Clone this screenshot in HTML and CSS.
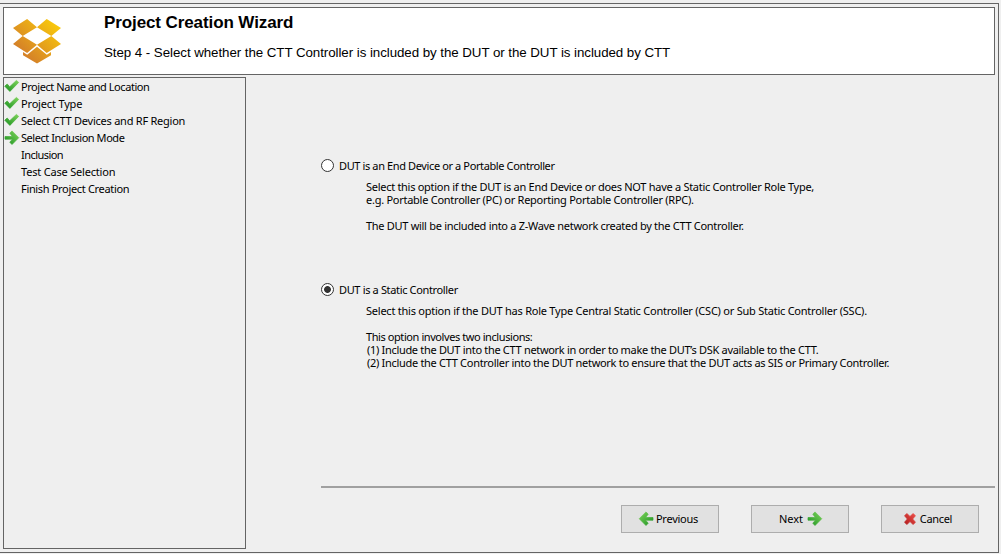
FILE: index.html
```html
<!DOCTYPE html>
<html lang="en">
<head>
<meta charset="utf-8">
<title>Project Creation Wizard</title>
<link rel="stylesheet" href="styles.css">
</head>
<body>
<svg width="0" height="0" class="defs" aria-hidden="true">
  <defs>
    <linearGradient id="green" x1="0" y1="1" x2="1" y2="0"><stop offset="0.2" stop-color="#2f9f2c"/><stop offset="1" stop-color="#7fd45c"/></linearGradient>
    <linearGradient id="red" x1="0" y1="1" x2="1" y2="0"><stop offset="0" stop-color="#b01c1c"/><stop offset="1" stop-color="#ee4f4a"/></linearGradient>
    <linearGradient id="gold" gradientUnits="userSpaceOnUse" x1="8" y1="38" x2="42" y2="4"><stop offset="0.1" stop-color="#d58228"/><stop offset="1" stop-color="#f9c80c"/></linearGradient>
    <symbol id="check" viewBox="0 0 16 16"><path d="M0.8 7.2 3.2 5 5.7 7.8 12.4 1.4 14.7 3.4 5.9 12.4Z" fill="url(#green)" stroke="url(#green)" stroke-width="0.8" stroke-linejoin="round"/></symbol>
    <symbol id="arrow" viewBox="0 0 16 16"><path d="M1 6.5H8.4L5.8 3.2 8 0.9 14.8 7.7 8 14.5 5.8 12.2 8.4 9.2H1Z" fill="url(#green)" stroke="url(#green)" stroke-width="0.7" stroke-linejoin="round"/></symbol>
    <symbol id="cross" viewBox="0 0 12 12"><path d="M0.5 2.7 2.9 0.5 6 3.4 9.1 0.5 11.5 2.7 8.7 6 11.5 9.3 9.1 11.5 6 8.6 2.9 11.5 0.5 9.3 3.3 6Z" fill="url(#red)" stroke="url(#red)" stroke-width="0.7" stroke-linejoin="round"/></symbol>
  </defs>
</svg>
<main class="window">
  <header class="banner">
    <svg class="logo" width="48" height="45" viewBox="0 0 48 45">
      <path fill="url(#gold)" d="M14.1 0 24 8.2 9.7 17 0 9ZM33.7 0 48 9 38.3 17 24 8.2ZM0 25 9.7 17 24 25.8 14.1 34ZM38.3 17 48 25 33.7 34 24 25.8ZM24 27.7 33.8 35.8 38 33V36.2L24 44.6 10 36.2V33L14.2 35.8Z"/>
    </svg>
    <div class="headings">
      <h1 class="title">Project Creation Wizard</h1>
      <p class="subtitle">Step 4 - Select whether the CTT Controller is included by the DUT or the DUT is included by CTT</p>
    </div>
  </header>
  <div class="body">
    <ol class="steps">
      <li class="step"><svg class="icon"><use href="#check"/></svg><span class="s1">Project Name and Location</span></li>
      <li class="step"><svg class="icon"><use href="#check"/></svg><span class="s2">Project Type</span></li>
      <li class="step"><svg class="icon"><use href="#check"/></svg><span class="s3">Select CTT Devices and RF Region</span></li>
      <li class="step"><svg class="icon"><use href="#arrow"/></svg><span class="s4">Select Inclusion Mode</span></li>
      <li class="step"><i class="icon"></i><span class="s5">Inclusion</span></li>
      <li class="step"><i class="icon"></i><span class="s6">Test Case Selection</span></li>
      <li class="step"><i class="icon"></i><span class="s7">Finish Project Creation</span></li>
    </ol>
    <section class="content">
      <div class="options">
        <div class="option first">
          <div class="choice"><span class="radio"></span><span class="c1">DUT is an End Device or a Portable Controller</span></div>
          <div class="details">
            <p class="d1">Select this option if the DUT is an End Device or does NOT have a Static Controller Role Type,</p>
            <p class="d2">e.g. Portable Controller (PC) or Reporting Portable Controller (RPC).</p>
            <p class="d3 spaced">The DUT will be included into a Z-Wave network created by the CTT Controller.</p>
          </div>
        </div>
        <div class="option">
          <div class="choice"><span class="radio checked"></span><span class="c2">DUT is a Static Controller</span></div>
          <div class="details">
            <p class="d4">Select this option if the DUT has Role Type Central Static Controller (CSC) or Sub Static Controller (SSC).</p>
            <p class="d5 spaced">This option involves two inclusions:</p>
            <p class="d6">(1) Include the DUT into the CTT network in order to make the DUT’s DSK available to the CTT.</p>
            <p class="d7">(2) Include the CTT Controller into the DUT network to ensure that the DUT acts as SIS or Primary Controller.</p>
          </div>
        </div>
      </div>
      <footer class="actions">
        <button class="button"><svg class="btn-icon flip"><use href="#arrow"/></svg><span class="b1">Previous</span></button>
        <button class="button next"><span class="b2">Next</span><svg class="btn-icon"><use href="#arrow"/></svg></button>
        <button class="button cancel"><svg class="cross"><use href="#cross"/></svg><span class="b3">Cancel</span></button>
      </footer>
    </section>
  </div>
</main>
</body>
</html>
```
FILE: styles.css
```css
* { box-sizing: border-box; }
body {
  margin: 0;
  padding-top: 3px;
  width: 1001px;
  height: 554px;
  overflow: hidden;
  background: #efefef;
  color: #000;
  font: 11px/13px "Noto Sans", sans-serif;
}
h1, p, ol { margin: 0; padding: 0; font-weight: normal; }
p, span { white-space: nowrap; }
.defs { position: absolute; }
.window {
  width: 999px;
  height: 550px;
  padding: 3px;
  border: 1px solid #646464;
  border-left: 0;
  display: flex;
  flex-direction: column;
  gap: 2px;
}
.banner {
  width: 992px;
  height: 68px;
  border: 1px solid #646464;
  background: #fff;
  display: flex;
  padding: 11px 9px;
}
.headings { padding-left: 43px; }
.title { font: bold 17px/18px "Liberation Sans", Arial, sans-serif; margin-top: -5px; letter-spacing: -0.1px; }
.subtitle { font: 13.33px/16px "Liberation Sans", Arial, sans-serif; margin-top: 13px; letter-spacing: -0.06px; }
.body { display: flex; height: 472px; }
.steps {
  list-style: none;
  width: 243px;
  border: 1px solid #646464;
}
.step { display: flex; align-items: center; height: 17px; gap: 1px; }
.icon { width: 16px; height: 16px; flex: none; }
.content {
  flex: 1;
  padding-left: 75px;
  display: flex;
  flex-direction: column;
}
.options { height: 409px; padding-top: 82px; }
.first { height: 124px; }
.choice { display: flex; align-items: center; height: 13px; gap: 5px; }
.radio { width: 13px; height: 13px; border: 1px solid #333; border-radius: 50%; background: #fff; }
.checked { background: radial-gradient(circle at center, #333 3px, #fff 3.8px); }
.details { padding: 8px 0 0 45px; }
.spaced { margin-top: 13px; }
.actions {
  border-top: 2px solid #a0a0a0;
  padding: 17px 0 0 300px;
  display: flex;
  gap: 32px;
  width: 674px;
}
.button {
  width: 98px;
  height: 28px;
  padding: 0;
  border: 1px solid #adadad;
  background: #e1e1e1;
  color: #000;
  font: inherit;
  display: flex;
  align-items: center;
  justify-content: center;
  gap: 2px;
}
.button span { padding-bottom: 2px; }
.btn-icon { width: 16px; height: 16px; }
.flip { transform: scaleX(-1); }
.next { gap: 4px; padding-left: 2px; }
.cancel { gap: 4px; padding-right: 4px; }
.button:first-child { padding-right: 4px; }
.cross { width: 12px; height: 12px; }

/* Per-line tracking */
.s1 { letter-spacing: -0.44px; }
.s2 { letter-spacing: -0.17px; }
.s3 { letter-spacing: -0.24px; }
.s4 { letter-spacing: -0.45px; }
.s5 { letter-spacing: -0.55px; }
.s6 { letter-spacing: -0.19px; }
.s7 { letter-spacing: -0.33px; }
.c1 { letter-spacing: -0.38px; }
.c2 { letter-spacing: -0.35px; }
.d1 { letter-spacing: -0.285px; }
.d2 { letter-spacing: -0.26px; }
.d3 { letter-spacing: -0.295px; }
.d4 { letter-spacing: -0.235px; }
.d5 { letter-spacing: -0.42px; }
.d6 { letter-spacing: -0.31px; padding-left: 1px; }
.d7 { letter-spacing: -0.3px; padding-left: 1px; }
.b1 { letter-spacing: -0.25px; }
.b3 { letter-spacing: -0.33px; }
```
